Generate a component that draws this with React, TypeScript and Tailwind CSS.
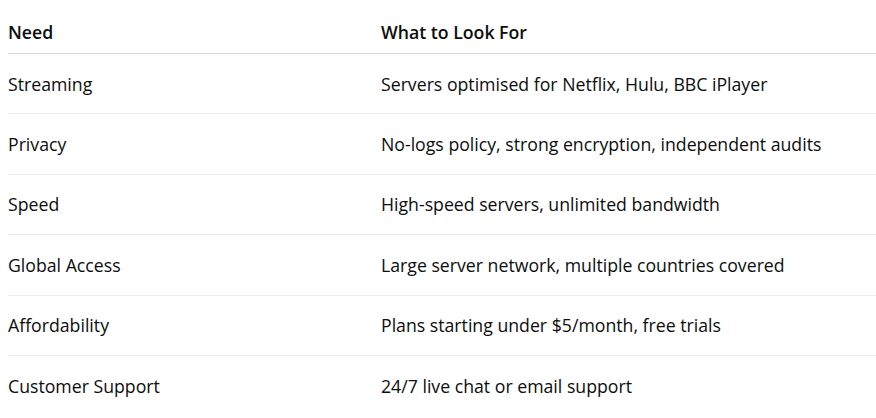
import React from "react";

const rows: [string, string][] = [
  ["Streaming", "Servers optimised for Netflix, Hulu, BBC iPlayer"],
  ["Privacy", "No-logs policy, strong encryption, independent audits"],
  ["Speed", "High-speed servers, unlimited bandwidth"],
  ["Global Access", "Large server network, multiple countries covered"],
  ["Affordability", "Plans starting under $5/month, free trials"],
  ["Customer Support", "24/7 live chat or email support"],
];

export default function App() {
  return (
    <div
      className="w-[876px] h-[418px] overflow-hidden bg-white pl-2 text-[#0d0d0d]"
      style={{ fontFamily: '"Open Sans", "Noto Sans", sans-serif' }}
    >
      <div className="grid grid-cols-[373px_1fr] border-b border-[#d9d9d9] pt-[20px] pb-[9px] text-[17.7px] leading-6 font-semibold">
        <div>Need</div>
        <div>What to Look For</div>
      </div>
      {rows.map(([a, b], i) => (
        <div
          key={a}
          className={
            "grid grid-cols-[373px_1fr] py-[17.7px] text-[17.7px] leading-6 " +
            (i < rows.length - 1 ? "border-b border-[#ececec]" : "")
          }
        >
          <div>{a}</div>
          <div>{b}</div>
        </div>
      ))}
    </div>
  );
}
